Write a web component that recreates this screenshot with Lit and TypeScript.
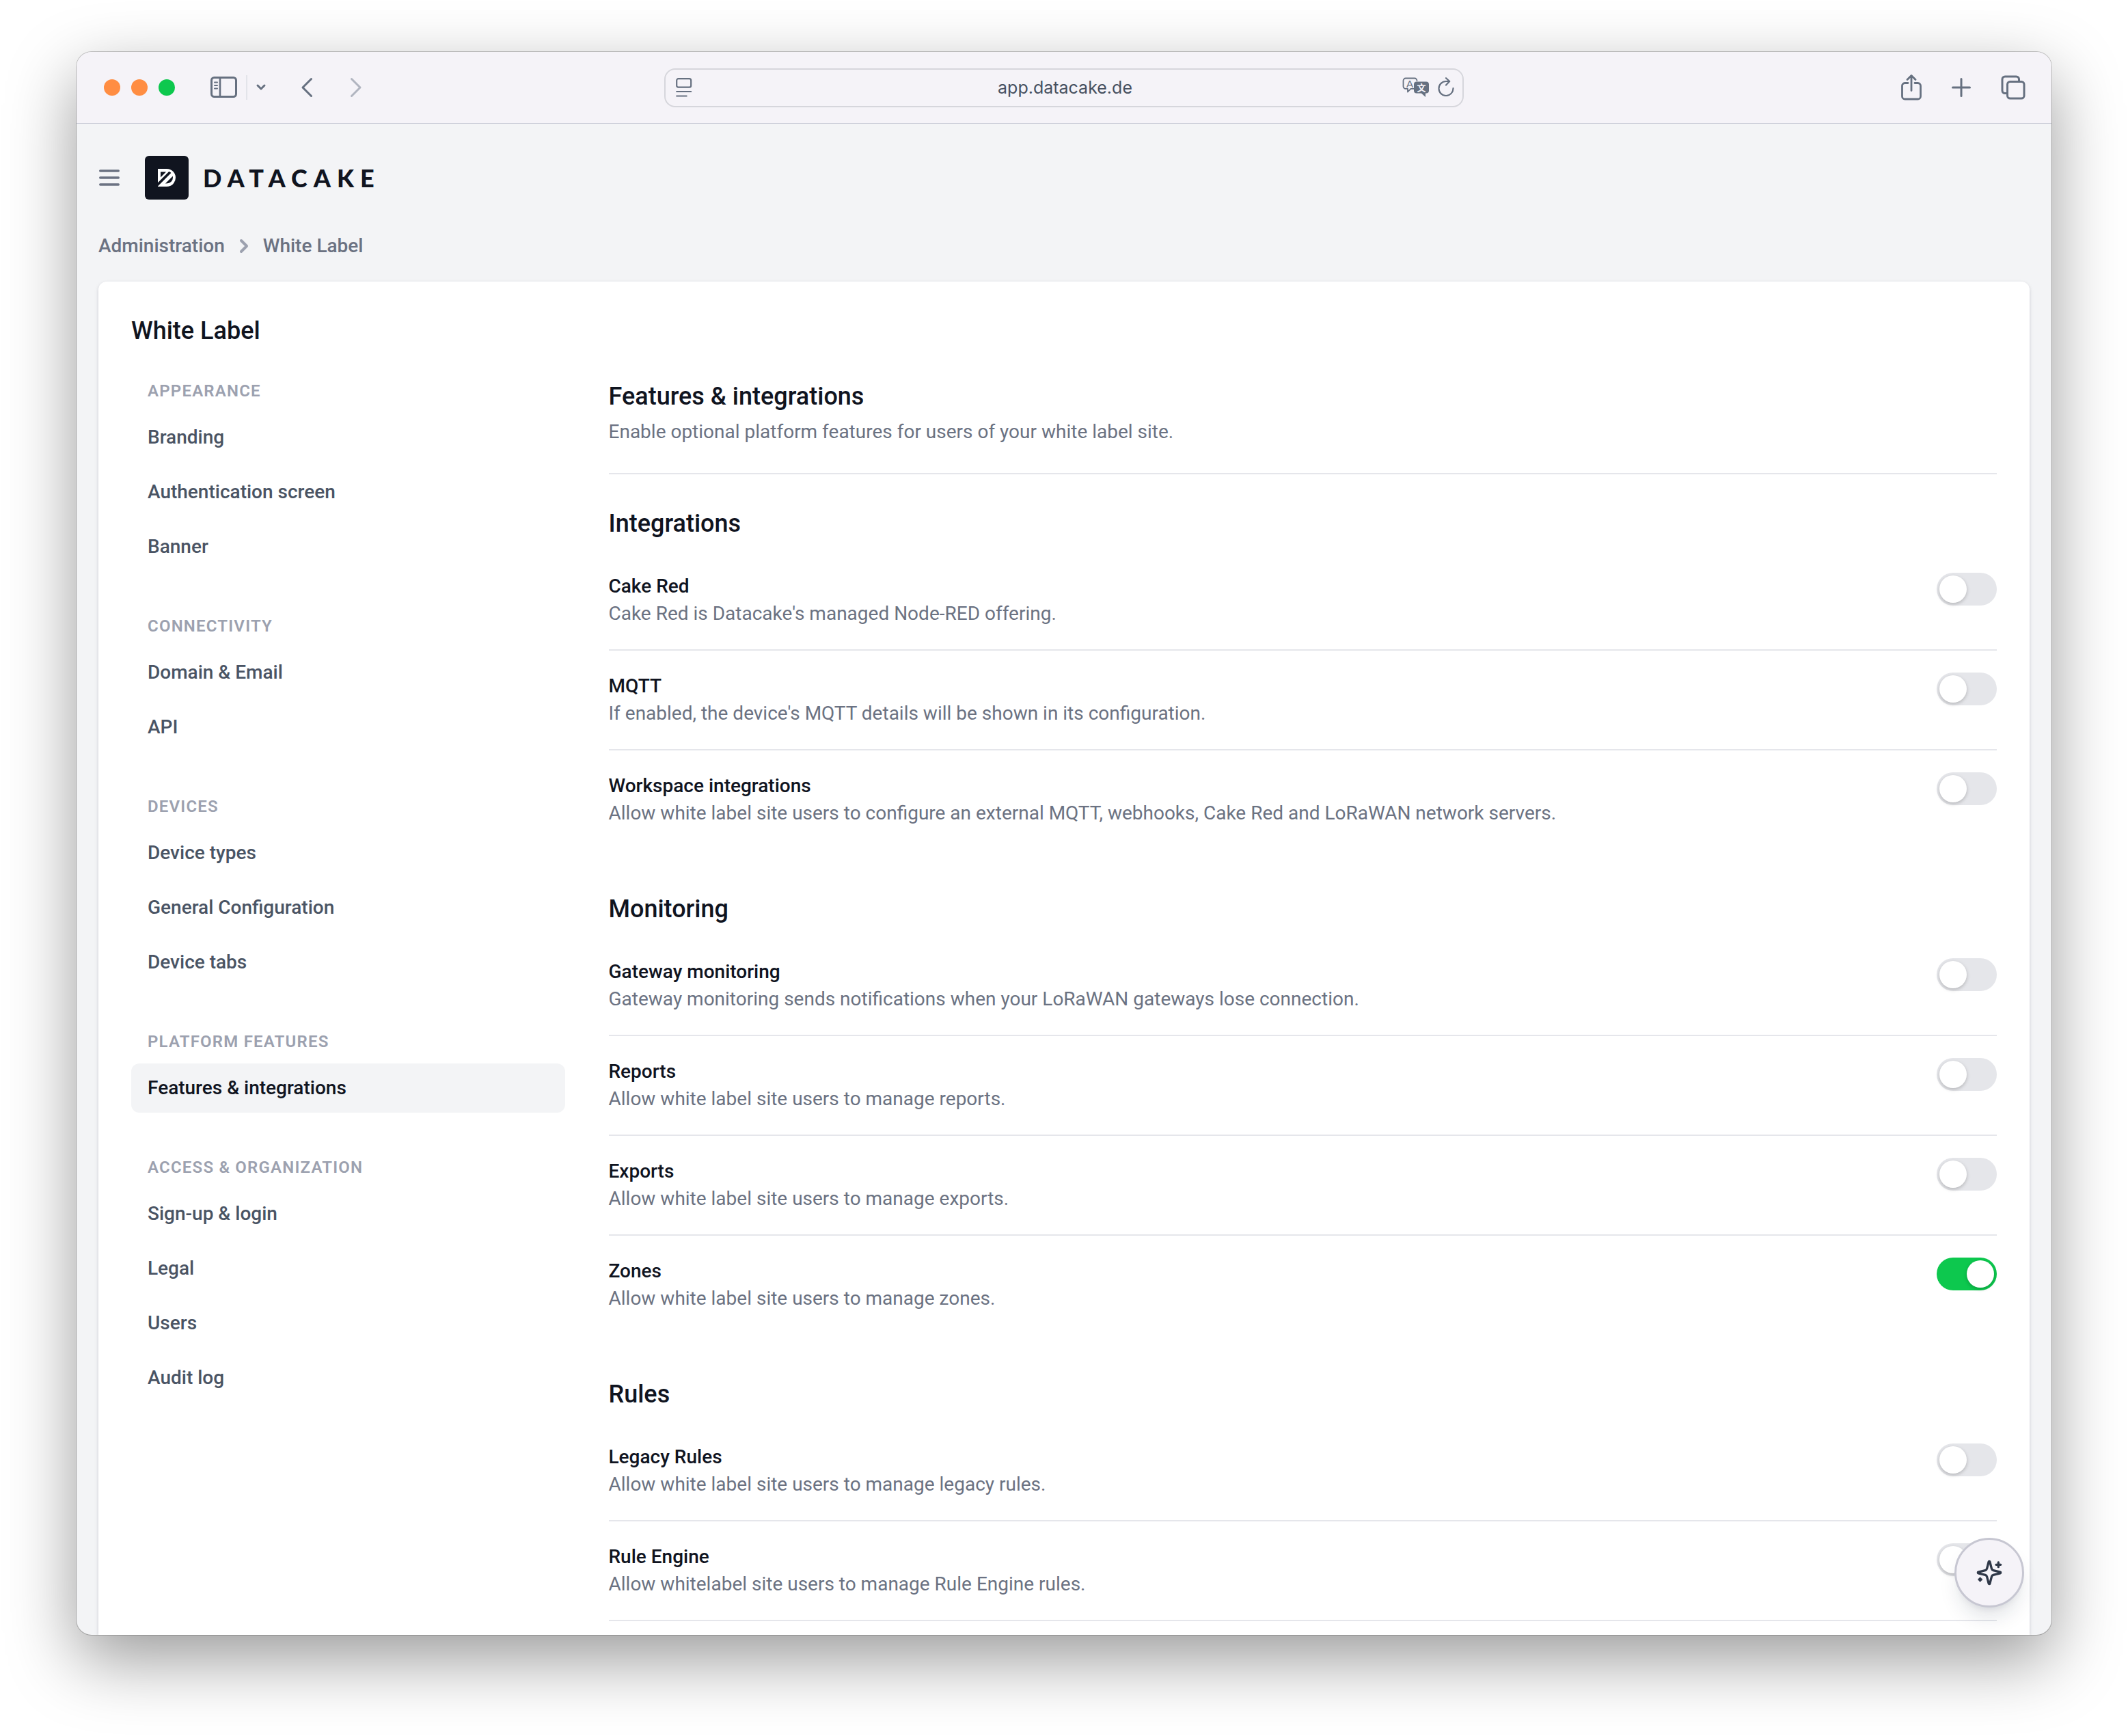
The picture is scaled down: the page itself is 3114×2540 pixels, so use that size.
import { LitElement, html, svg, css } from "lit";
import { customElement, property, state } from "lit/decorators.js";
import { classMap } from "lit/directives/class-map.js";

interface NavGroup {
  label: string;
  items: string[];
}

interface Feature {
  id: string;
  title: string;
  text: string;
  on?: boolean;
}

interface Section {
  title: string;
  features: Feature[];
  ruled?: boolean;
}

const NAV: NavGroup[] = [
  { label: "Appearance", items: ["Branding", "Authentication screen", "Banner"] },
  { label: "Connectivity", items: ["Domain & Email", "API"] },
  { label: "Devices", items: ["Device types", "General Configuration", "Device tabs"] },
  { label: "Platform features", items: ["Features & integrations"] },
  { label: "Access & organization", items: ["Sign-up & login", "Legal", "Users", "Audit log"] },
];

const SECTIONS: Section[] = [
  {
    title: "Integrations",
    features: [
      { id: "cake-red", title: "Cake Red", text: "Cake Red is Datacake's managed Node-RED offering." },
      { id: "mqtt", title: "MQTT", text: "If enabled, the device's MQTT details will be shown in its configuration." },
      {
        id: "workspace",
        title: "Workspace integrations",
        text: "Allow white label site users to configure an external MQTT, webhooks, Cake Red and LoRaWAN network servers.",
      },
    ],
  },
  {
    title: "Monitoring",
    features: [
      {
        id: "gateway",
        title: "Gateway monitoring",
        text: "Gateway monitoring sends notifications when your LoRaWAN gateways lose connection.",
      },
      { id: "reports", title: "Reports", text: "Allow white label site users to manage reports." },
      { id: "exports", title: "Exports", text: "Allow white label site users to manage exports." },
      { id: "zones", title: "Zones", text: "Allow white label site users to manage zones.", on: true },
    ],
  },
  {
    title: "Rules",
    ruled: true,
    features: [
      { id: "legacy", title: "Legacy Rules", text: "Allow white label site users to manage legacy rules." },
      { id: "engine", title: "Rule Engine", text: "Allow whitelabel site users to manage Rule Engine rules." },
    ],
  },
];

const icon = (width: number, height: number, viewBox: string, body: unknown) => html`<svg
  width=${width}
  height=${height}
  viewBox=${viewBox}
  fill="none"
  stroke="currentColor"
  stroke-linecap="round"
  stroke-linejoin="round"
  aria-hidden="true"
>
  ${body}
</svg>`;

const reset = css`
  * {
    box-sizing: border-box;
    margin: 0;
  }
  button {
    display: flex;
    padding: 0;
    border: 0;
    background: none;
    color: inherit;
    font: inherit;
  }
  svg {
    display: block;
    flex: none;
  }
`;

@customElement("browser-toolbar")
class BrowserToolbar extends LitElement {
  static styles = [
    reset,
    css`
      :host {
        display: grid;
        grid-template-columns: 1fr minmax(0, 1170px) 1fr;
        align-items: center;
        height: 105px;
        border-bottom: 1px solid #c8cad5;
        background: #f5f3f8;
        color: #667080;
      }
      .left,
      .right,
      .lights {
        display: flex;
        align-items: center;
      }
      .left {
        padding-left: 40px;
      }
      .lights {
        gap: 16px;
        margin-right: 52px;
      }
      .light {
        width: 24px;
        height: 24px;
        border-radius: 50%;
        background: #ff8d42;
      }
      .light.green {
        background: #0dc84e;
      }
      .split {
        width: 2px;
        height: 36px;
        margin: 0 12px;
        background: #e3e4ea;
      }
      .history {
        display: flex;
        gap: 54px;
        margin-left: 50px;
      }
      .faded {
        color: #b1b5c0;
      }
      .right {
        justify-content: flex-end;
        gap: 42px;
        padding-right: 37px;
      }
      .address {
        display: grid;
        grid-template-columns: 90px 1fr 90px;
        align-items: center;
        height: 57px;
        padding: 0 12px 0 15px;
        border: 2px solid #d6d6dc;
        border-radius: 16px;
      }
      .url {
        width: 100%;
        padding: 0;
        border: 0;
        outline: 0;
        background: none;
        color: #465060;
        font: 25px/40px Inter, sans-serif;
        text-align: center;
      }
      .tools {
        display: flex;
        justify-content: flex-end;
        gap: 12px;
      }
      .glyph {
        font-family: "Liberation Sans", "Noto Sans CJK SC", sans-serif;
        stroke: none;
      }
    `,
  ];

  render() {
    return html`
      <div class="left">
        <div class="lights">
          <span class="light"></span><span class="light"></span><span class="light green"></span>
        </div>
        <button aria-label="Sidebar">
          ${icon(
            40,
            32,
            "0 0 40 32",
            svg`<rect x="1.5" y="1.5" width="36" height="28" rx="4" stroke-width="3"/><path d="M14 2v27" stroke-width="2.6"/><path d="M6 8.500h4M6 13h4M6 17.500h4" stroke-width="2"/>`
          )}
        </button>
        <span class="split"></span>
        <button aria-label="Tab groups">
          ${icon(16, 12, "0 0 16 12", svg`<path d="M3 3l5 5 5-5" stroke-width="3"/>`)}
        </button>
        <div class="history">
          <button aria-label="Back">
            ${icon(18, 30, "0 0 18 30", svg`<path d="M15.500 2.500 3 15l12.500 12.500" stroke-width="3"/>`)}
          </button>
          <button class="faded" aria-label="Forward">
            ${icon(18, 30, "0 0 18 30", svg`<path d="M2.500 2.500 15 15 2.500 27.500" stroke-width="3"/>`)}
          </button>
        </div>
      </div>
      <div class="address">
        ${icon(
          24,
          28,
          "0 0 24 28",
          svg`<rect x="1.200" y="1.200" width="21" height="12.500" rx="2.500" stroke-width="2.200"/><path d="M1.200 20h21M1.200 26.500h14.500" stroke-width="2.200"/>`
        )}
        <input class="url" type="text" aria-label="Address" .value=${"app.datacake.de"} />
        <div class="tools">
          <button aria-label="Translate">
            ${icon(
              40,
              30,
              "0 0 40 30",
              svg`<path d="M17 16.800h-4.500L8 21.500v-4.700H5a3.500 3.500 0 0 1-3.500-3.500V5A3.500 3.500 0 0 1 5 1.500h13A3.500 3.500 0 0 1 21.500 5" stroke-width="1.800"/>
              <path d="M21 6.500h14a4 4 0 0 1 4 4v9a4 4 0 0 1-4 4h-1V29l-6-5.500h-7a4 4 0 0 1-4-4v-9a4 4 0 0 1 4-4z" fill="currentColor" stroke="none"/>
              <text class="glyph" x="11" y="14.500" font-size="15" text-anchor="middle" fill="currentColor">A</text>
              <text class="glyph" x="28" y="20" font-size="13" font-weight="700" text-anchor="middle" fill="#f5f3f8">文</text>`
            )}
          </button>
          <button aria-label="Reload">
            ${icon(
              24,
              28,
              "0 0 24 28",
              svg`<path d="M22.500 16A10.500 10.500 0 1 1 12 6h5" stroke-width="2.200"/><path d="M12 1.200 17.200 6 12 11.500" stroke-width="2.200"/>`
            )}
          </button>
        </div>
      </div>
      <div class="right">
        <button aria-label="Share">
          ${icon(
            32,
            40,
            "0 0 32 40",
            svg`<path d="M11 13.500H6.500a4 4 0 0 0-4 4V33a4 4 0 0 0 4 4h19a4 4 0 0 0 4-4V17.500a4 4 0 0 0-4-4H21M16 24.500V3M10 8.500l6-6 6 6" stroke-width="2.800"/>`
          )}
        </button>
        <button aria-label="New tab">
          ${icon(30, 30, "0 0 30 30", svg`<path d="M15 2.500v25M2.500 15h25" stroke-width="3"/>`)}
        </button>
        <button aria-label="Tab overview">
          ${icon(
            38,
            38,
            "0 0 38 38",
            svg`<rect x="10.500" y="10.500" width="24.500" height="24.500" rx="4" stroke-width="3"/><path d="M10.500 27.500H7a4 4 0 0 1-4-4V7a4 4 0 0 1 4-4h16.500a4 4 0 0 1 4 4v3.500" stroke-width="3"/>`
          )}
        </button>
      </div>
    `;
  }
}

@customElement("side-nav")
class SideNav extends LitElement {
  static styles = [
    reset,
    css`
      :host {
        display: block;
      }
      nav {
        display: flex;
        flex-direction: column;
        gap: 64px;
      }
      .label {
        margin-bottom: 16px;
        padding: 0 24px;
        color: #9ca1af;
        font-size: 24px;
        font-weight: 600;
        line-height: 32px;
        letter-spacing: 0.05em;
        text-transform: uppercase;
      }
      .items {
        display: flex;
        flex-direction: column;
        gap: 8px;
        padding: 0;
        list-style: none;
      }
      .item {
        display: block;
        padding: 16px 24px;
        border-radius: 12px;
        color: #4a5464;
        font-size: 28px;
        font-weight: 500;
        line-height: 40px;
        text-decoration: none;
      }
      .item.active {
        background: #f3f4f6;
        color: #10141f;
      }
    `,
  ];

  @property() current = "";

  render() {
    return html`<nav aria-label="White Label">
      ${NAV.map(
        (group) => html`<div>
          <h3 class="label">${group.label}</h3>
          <ul class="items">
            ${group.items.map(
              (item) => html`<li>
                <a class=${classMap({ item: true, active: item === this.current })} href="#">${item}</a>
              </li>`
            )}
          </ul>
        </div>`
      )}
    </nav>`;
  }
}

@customElement("feature-section")
class FeatureSection extends LitElement {
  static styles = [
    reset,
    css`
      :host {
        display: block;
      }
      .title {
        margin-bottom: 16px;
        font-size: 36px;
        font-weight: 500;
        line-height: 48px;
      }
      .row {
        display: flex;
        align-items: flex-start;
        justify-content: space-between;
        gap: 32px;
        padding: 32px 0;
        font-size: 28px;
        line-height: 40px;
      }
      .row:not(:last-child),
      .ruled .row {
        border-bottom: 2px solid #e5e6eb;
      }
      .name {
        display: block;
        font-weight: 500;
      }
      .text {
        color: #6b7282;
      }
      .switch {
        appearance: none;
        flex: none;
        width: 88px;
        height: 48px;
        margin: 0;
        padding: 4px;
        border-radius: 24px;
        background: #e5e6ea;
      }
      .switch::before {
        content: "";
        display: block;
        width: 40px;
        height: 40px;
        border-radius: 50%;
        background: #fff;
        box-shadow: 0 2px 6px rgba(0, 0, 0, 0.12), 0 2px 4px rgba(0, 0, 0, 0.1);
      }
      .switch:checked {
        background: #0dc84e;
      }
      .switch:checked::before {
        margin-left: auto;
      }
    `,
  ];

  @property({ attribute: false }) section!: Section;

  render() {
    const { title, features, ruled } = this.section;
    return html`
      <h3 class="title">${title}</h3>
      <div class=${classMap({ ruled: !!ruled })}>
        ${features.map(
          (f) => html`<div class="row">
            <div>
              <label class="name" for=${f.id}>${f.title}</label>
              <p class="text" id="${f.id}-text">${f.text}</p>
            </div>
            <input
              class="switch"
              type="checkbox"
              role="switch"
              id=${f.id}
              aria-describedby="${f.id}-text"
              .checked=${!!f.on}
            />
          </div>`
        )}
      </div>
    `;
  }
}

@customElement("app-root")
class AppRoot extends LitElement {
  static styles = [
    reset,
    css`
      :host {
        display: flex;
        box-sizing: border-box;
        min-height: 100vh;
        padding: 76px 112px 148px;
        background: #fff;
        color: #10141f;
        font-family: Roboto, "Liberation Sans", sans-serif;
      }
      .window {
        position: relative;
        display: flex;
        flex: 1;
        flex-direction: column;
        min-width: 0;
        overflow: hidden;
        border-radius: 22px;
        background: #f3f4f6;
        box-shadow: 0 0 0 1px rgba(0, 0, 0, 0.22), 0 36px 100px rgba(0, 0, 0, 0.4);
      }
      .page {
        display: flex;
        flex: 1;
        flex-direction: column;
        padding: 47px 32px 0;
      }
      .brand {
        display: flex;
        align-items: center;
        margin-bottom: 48px;
      }
      .menu {
        margin-right: 36px;
        color: #6b7282;
      }
      .logo {
        display: flex;
        align-items: center;
        gap: 21px;
        color: inherit;
        text-decoration: none;
      }
      .wordmark {
        font: 900 36px/62px Lato, sans-serif;
        letter-spacing: 9px;
      }
      .crumbs {
        display: flex;
        gap: 8px;
        margin-bottom: 32px;
        color: #6b7282;
        font-size: 28px;
        font-weight: 500;
        line-height: 40px;
      }
      .crumb {
        color: inherit;
        text-decoration: none;
      }
      .sep {
        color: #9ca1af;
      }
      .card {
        flex: 1;
        padding: 48px 48px 20px;
        border-radius: 12px 12px 0 0;
        background: #fff;
        box-shadow: 0 2px 6px rgba(20, 20, 50, 0.1), 0 2px 4px rgba(20, 20, 50, 0.08);
      }
      .heading {
        font-size: 36px;
        font-weight: 500;
        line-height: 48px;
      }
      .columns {
        display: grid;
        grid-template-columns: repeat(12, minmax(0, 1fr));
        column-gap: 64px;
        margin-top: 48px;
      }
      .side {
        grid-column: span 3;
      }
      .content {
        display: flex;
        grid-column: span 9;
        flex-direction: column;
      }
      .intro {
        padding-bottom: 40px;
        border-bottom: 2px solid #e5e6eb;
      }
      .lead {
        margin-top: 8px;
        color: #6b7282;
        font-size: 28px;
        line-height: 40px;
      }
      .sections {
        display: flex;
        flex-direction: column;
        gap: 64px;
        margin-top: 48px;
      }
      .assistant {
        position: absolute;
        right: 40px;
        bottom: 40px;
        align-items: center;
        justify-content: center;
        width: 102px;
        height: 102px;
        border: 3px solid #c7c7d2;
        border-radius: 50%;
        background: #f5f3f8;
        color: #2f3848;
        box-shadow: 0 20px 30px -6px rgba(20, 30, 60, 0.12), 0 8px 12px -8px rgba(20, 30, 60, 0.12);
      }
    `,
  ];

  @state() private current = "Features & integrations";

  render() {
    return html`<div class="window">
      <browser-toolbar></browser-toolbar>
      <div class="page">
        <header class="brand">
          <button class="menu" aria-label="Menu">
            ${icon(32, 40, "2.4 0 19.2 24", svg`<path d="M4 6h16M4 12h16M4 18h16" stroke-width="2"/>`)}
          </button>
          <a class="logo" href="#">
            <svg width="64" height="64" viewBox="0 0 64 64" aria-hidden="true">
              <rect width="64" height="64" rx="6" fill="#10141f" />
              <g transform="translate(19 19)">
                <path d="M0 0h13a13 13 0 0 1 0 26H0z" fill="#fff" />
                <path
                  d="M4 4.500h8L4 12.500zM-1 21.300 16.200 4.100q2 .6 3.200 1.900L-1 26.400zM21.800 10.800q.8 4.500-2 7.800-3 3.200-8.800 3z"
                  fill="#10141f"
                />
                <path d="M0 26 3 23 6 26z" fill="#fff" />
              </g>
            </svg>
            <span class="wordmark">DATACAKE</span>
          </a>
        </header>
        <nav class="crumbs" aria-label="Breadcrumb">
          <a class="crumb" href="#">Administration</a>
          <span class="sep">${icon(40, 40, "0 0 20 20", svg`<path d="M8 6l4 4-4 4" stroke-width="2"/>`)}</span>
          <a class="crumb" href="#">White Label</a>
        </nav>
        <main class="card">
          <h1 class="heading">White Label</h1>
          <div class="columns">
            <side-nav class="side" .current=${this.current}></side-nav>
            <div class="content">
              <div class="intro">
                <h2 class="heading">Features &amp; integrations</h2>
                <p class="lead">Enable optional platform features for users of your white label site.</p>
              </div>
              <div class="sections">
                ${SECTIONS.map((s) => html`<feature-section .section=${s}></feature-section>`)}
              </div>
            </div>
          </div>
        </main>
      </div>
      <button class="assistant" aria-label="Assistant">
        ${icon(
          40,
          40,
          "0 0 24 24",
          svg`<path d="M9.937 15.500A2 2 0 0 0 8.500 14.063l-6.135-1.582a.5.5 0 0 1 0-.962L8.500 9.936A2 2 0 0 0 9.937 8.500l1.582-6.135a.5.5 0 0 1 .963 0L14.063 8.500A2 2 0 0 0 15.500 9.937l6.135 1.581a.5.5 0 0 1 0 .964L15.500 14.063a2 2 0 0 0-1.437 1.437l-1.582 6.135a.5.5 0 0 1-.963 0zM20 3v4M22 5h-4M4 17v2M5 18H3" stroke-width="2"/>`
        )}
      </button>
    </div>`;
  }
}
